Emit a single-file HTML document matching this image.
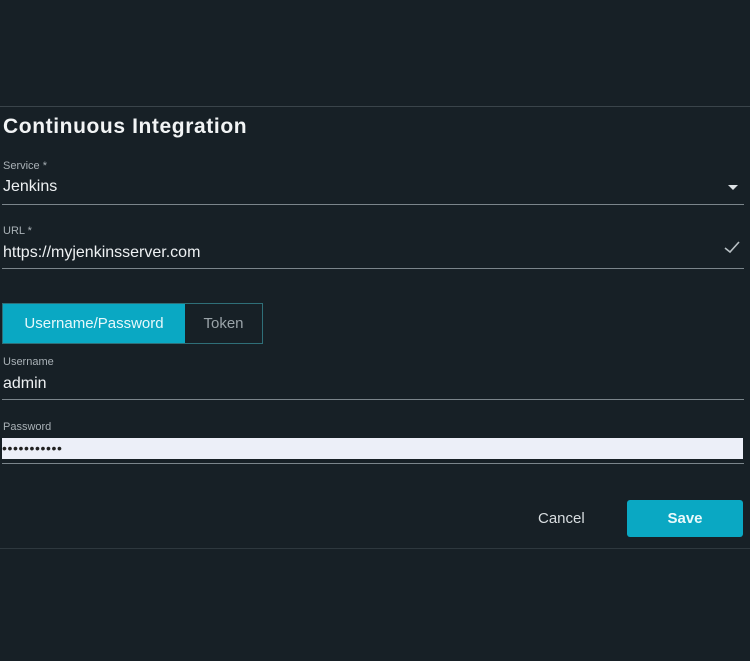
<!DOCTYPE html>
<html><head><style>
body{margin:0;width:750px;height:661px;background:#172026;font-family:"Liberation Sans",sans-serif;position:relative;overflow:hidden;color:#e8ecef}
.a{position:absolute}
.ln{position:absolute;left:2px;width:742px;height:1px;background:#7b858b}
.lbl{position:absolute;left:3px;font-size:11px;color:#a9b1b6}
.val{position:absolute;left:3px;font-size:16px;color:#eef1f3}
</style></head><body>
<div class="a" style="left:0;top:106px;width:750px;height:1px;background:#3a444a"></div>
<div class="a" style="left:3px;top:115px;font-size:21px;letter-spacing:0.6px;font-weight:bold;color:#f2f4f5">Continuous Integration</div>
<div class="lbl" style="top:160px">Service *</div>
<div class="val" style="top:178px">Jenkins</div>
<div class="a" style="left:728px;top:185px;width:0;height:0;border-left:5px solid transparent;border-right:5px solid transparent;border-top:5px solid #dde2e5"></div>
<div class="ln" style="top:204px"></div>
<div class="lbl" style="top:225px">URL *</div>
<div class="val" style="top:244px">https://myjenkinsserver.com</div>
<svg class="a" style="left:723px;top:239px" width="18" height="16"><path d="M2 9 L7 13 L16 3" stroke="#b8c0c4" stroke-width="1.6" fill="none"/></svg>
<div class="ln" style="top:268px"></div>
<div class="a" style="left:2px;top:303px;width:261px;height:41px;border:1px solid #2f6f78;box-sizing:border-box"></div>
<div class="a" style="left:3px;top:304px;width:182px;height:39px;background:#0aa8c3;color:#e6f8fb;font-size:15px;line-height:39px;text-align:center">Username/Password</div>
<div class="a" style="left:185px;top:304px;width:77px;height:39px;color:#9aa3a8;font-size:15px;line-height:39px;text-align:center">Token</div>
<div class="lbl" style="top:356px">Username</div>
<div class="val" style="top:375px">admin</div>
<div class="ln" style="top:399px"></div>
<div class="lbl" style="top:421px">Password</div>
<div class="a" style="left:2px;top:438px;width:741px;height:21px;background:#eceff8"></div>
<div class="a" style="left:2px;top:438px;font-size:14px;color:#222;line-height:21px;letter-spacing:0.6px">•••••••••••</div>
<div class="ln" style="top:463px"></div>
<div class="a" style="left:538px;top:510px;font-size:15px;color:#d8dde0">Cancel</div>
<div class="a" style="left:627px;top:500px;width:116px;height:37px;background:#0aa8c3;border-radius:3px;color:#eaf9fb;font-size:15px;font-weight:bold;line-height:37px;text-align:center">Save</div>
<div class="a" style="left:0;top:548px;width:750px;height:1px;background:#2e383e"></div>
</body></html>
